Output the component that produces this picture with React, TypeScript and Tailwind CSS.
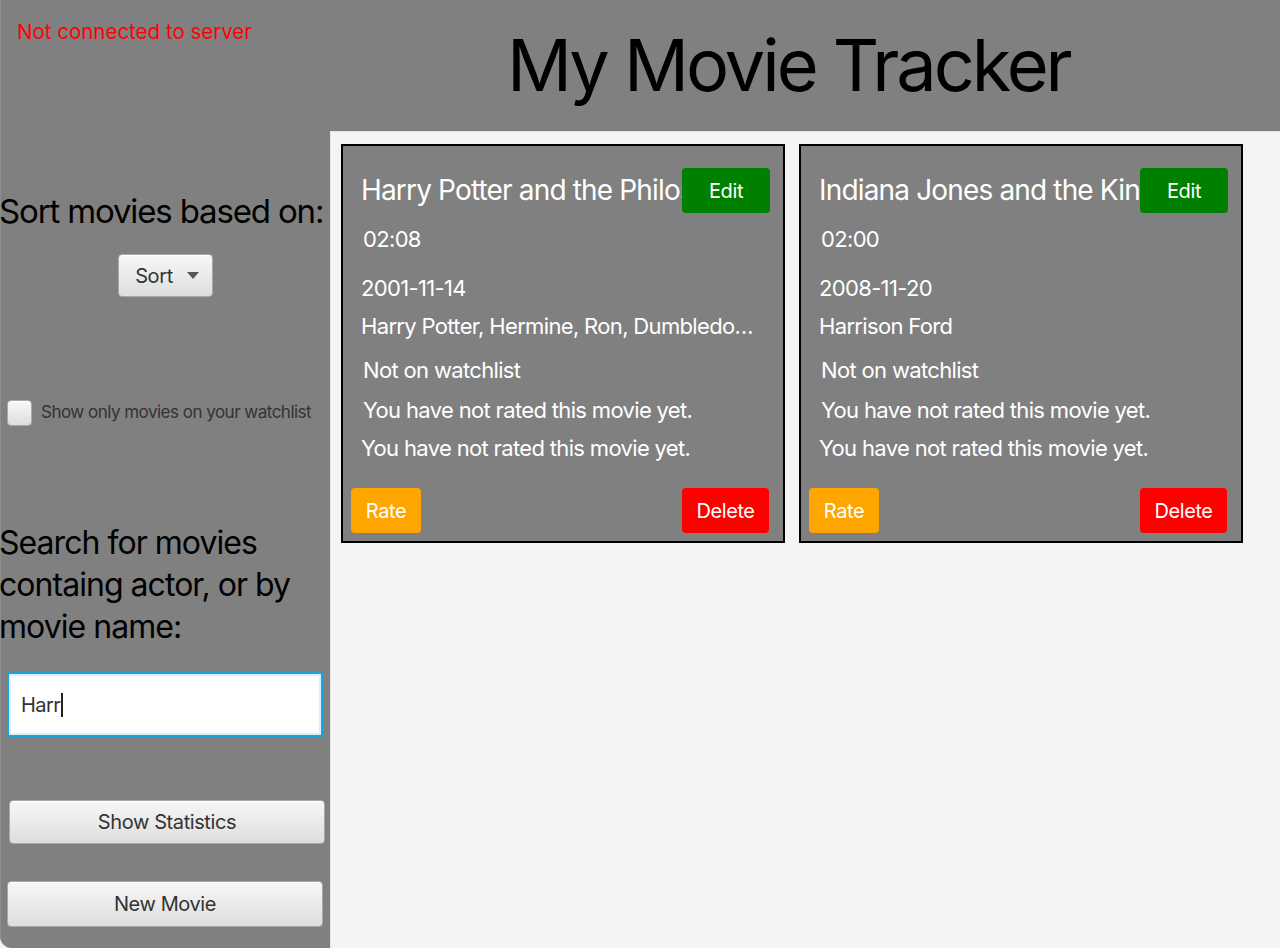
import { useState } from "react";

interface Movie {
  title: string;
  length: string;
  released: string;
  actors: string;
}

const movies: Movie[] = [
  {
    title: "Harry Potter and the Philosopher's Stone",
    length: "02:08",
    released: "2001-11-14",
    actors: "Harry Potter, Hermine, Ron, Dumbledore, Hagrid",
  },
  {
    title: "Indiana Jones and the Kingdom of the Crystal Skull",
    length: "02:00",
    released: "2008-11-20",
    actors: "Harrison Ford",
  },
];

const fxButton =
  "flex items-center justify-center rounded-[4px] border border-[#a9a9a9] bg-gradient-to-b from-[#f7f7f7] to-[#dedede] text-[20px] tracking-[-0.02em] text-[#333] shadow-[inset_0_1px_0_#fff]";

const line = "text-[22px] leading-[30px] tracking-[-0.03em]";

const MovieCard = ({ movie }: { movie: Movie }) => (
  <div className="flex h-[399px] w-[444px] flex-col border-2 border-black bg-[#808080] text-white">
    <div className="mt-[22px] flex h-[45px] items-center pl-[18px] pr-[13px]">
      <div className="flex-1 overflow-hidden whitespace-nowrap text-[28px] leading-[45px] tracking-[-0.03em]">
        {movie.title}
      </div>
      <button className="h-[45px] w-[88px] shrink-0 rounded-[4px] bg-[#008000] text-[20px] tracking-[-0.02em] text-white">
        Edit
      </button>
    </div>
    <div className={`mt-[11px] pl-[20px] ${line}`}>{movie.length}</div>
    <div className={`mt-[19px] pl-[18px] ${line}`}>{movie.released}</div>
    <div className={`mt-[8px] truncate pl-[18px] pr-[24px] ${line}`}>{movie.actors}</div>
    <div className={`mt-[14px] pl-[20px] ${line}`}>Not on watchlist</div>
    <div className={`mt-[10px] pl-[20px] ${line}`}>You have not rated this movie yet.</div>
    <div className={`mt-[8px] pl-[18px] ${line}`}>You have not rated this movie yet.</div>
    <div className="mt-[25px] flex items-center justify-between pl-[8px] pr-[14px]">
      <button className="h-[45px] w-[70px] rounded-[4px] bg-[#ffa500] text-[20px] tracking-[-0.02em] text-white">
        Rate
      </button>
      <button className="h-[45px] w-[87px] rounded-[4px] bg-[#ff0000] text-[20px] tracking-[-0.02em] text-white">
        Delete
      </button>
    </div>
  </div>
);

export default function App() {
  const [watchOnly, setWatchOnly] = useState(false);

  return (
    <div
      className="h-[948px] w-[1280px] overflow-hidden bg-[#f4f4f4]"
      style={{ fontFamily: "Inter, 'Noto Sans', sans-serif" }}
    >
      <div className="grid h-full grid-cols-[330px_1fr] grid-rows-[131px_1fr] overflow-hidden rounded-bl-[12px] bg-[#808080] shadow-[inset_1px_0_0_#8e8e8e]">
        {/* header */}
        <div className="pl-[17px] pt-[19px] text-[20.5px] leading-[26px] text-[#ff0000]">
          Not connected to server
        </div>
        <div className="pl-[177px] pt-[29px] text-[72px] leading-[72px] tracking-[-0.042em] text-black">
          My Movie Tracker
        </div>

        {/* sidebar */}
        <div className="flex flex-col">
          <div className="-ml-[1px] mt-[60px] whitespace-nowrap text-[33px] leading-[40px] tracking-[-0.035em] text-black">
            Sort movies based on:
          </div>
          <div className="mt-[23px] flex justify-center">
            <button className={`${fxButton} h-[43px] w-[95px] gap-[14px] pl-[4px]`}>
              Sort
              <svg width="12" height="7" viewBox="0 0 12 7">
                <path d="M0 0h12L6 7z" fill="#555" />
              </svg>
            </button>
          </div>
          <label className="ml-[7px] mt-[102px] flex h-[27px] items-center gap-[9px]">
            <span
              onClick={() => setWatchOnly(!watchOnly)}
              className="h-[26px] w-[25px] shrink-0 rounded-[4px] border border-[#a9a9a9] bg-gradient-to-b from-[#f7f7f7] to-[#dedede] shadow-[inset_0_1px_0_#fff]"
            />
            <span className="whitespace-nowrap text-[17px] tracking-[-0.03em] text-[#333]">
              Show only movies on your watchlist
            </span>
          </label>
          <div className="-ml-[1px] mt-[96px] text-[32px] leading-[42px] tracking-[-0.03em] text-black">
            Search for movies
            <br />
            containg actor, or by
            <br />
            movie name:
          </div>
          <div className="ml-[7px] mt-[24px] flex h-[65px] w-[316px] items-center rounded-[3px] border-2 border-[#1aa3dc] bg-white pl-[12px] shadow-[inset_0_0_0_2px_#dcf0f9]">
            <span className="text-[20px] tracking-[-0.03em] text-[#333]">Harr</span>
            <span className="ml-[1px] h-[24px] w-[2px] bg-[#222]" />
          </div>
          <button className={`${fxButton} ml-[9px] mt-[63px] h-[44px] w-[316px]`}>
            Show Statistics
          </button>
          <button className={`${fxButton} ml-[7px] mt-[37px] h-[46px] w-[316px]`}>
            New Movie
          </button>
        </div>

        {/* content */}
        <div className="flex items-start gap-[14px] border-l border-t border-[#e4e4e4] bg-[#f4f4f4] pl-[10px] pt-[12px]">
          {movies.map((m) => (
            <MovieCard key={m.title} movie={m} />
          ))}
        </div>
      </div>
    </div>
  );
}
